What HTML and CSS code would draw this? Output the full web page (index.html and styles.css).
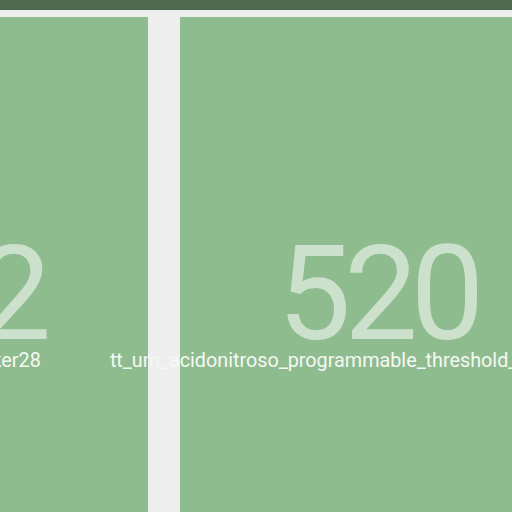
FILE: index.html
```html
<!DOCTYPE html>
<html>
<head>
<meta charset="utf-8">
<link rel="stylesheet" href="styles.css">
</head>
<body>
<div class="topbar"></div>
<div class="strip">
  <div class="card">
    <div class="count">512</div>
    <div class="label">tt_um_dual_blinker28</div>
  </div>
  <div class="card">
    <div class="count">520</div>
    <div class="label">tt_um_acidonitroso_programmable_threshold_voltage_alarms</div>
  </div>
</div>
</body>
</html>
```
FILE: styles.css
```css
html, body {
  margin: 0;
  padding: 0;
  background: #eeeeee;
  overflow: hidden;
  font-family: Roboto, "Noto Sans", sans-serif;
}
.topbar {
  height: 10px;
  background: #4e6a4e;
}
.strip {
  display: flex;
  gap: 32px;
  margin-top: 7px;
  margin-left: -253px;
}
.card {
  flex: 0 0 401px;
  width: 401px;
  min-width: 0;
  height: 560px;
  background: #8fbc8f;
  display: flex;
  flex-direction: column;
  align-items: center;
  padding-top: 222px;
  box-sizing: border-box;
}
.count {
  font-size: 131px;
  font-weight: 400;
  line-height: 110px;
  letter-spacing: -7px;
  margin-left: -6px;
  color: rgba(255, 255, 255, 0.55);
}
.label {
  font-size: 19.8px;
  line-height: 24px;
  color: #f4f8f4;
  white-space: nowrap;
}
```
